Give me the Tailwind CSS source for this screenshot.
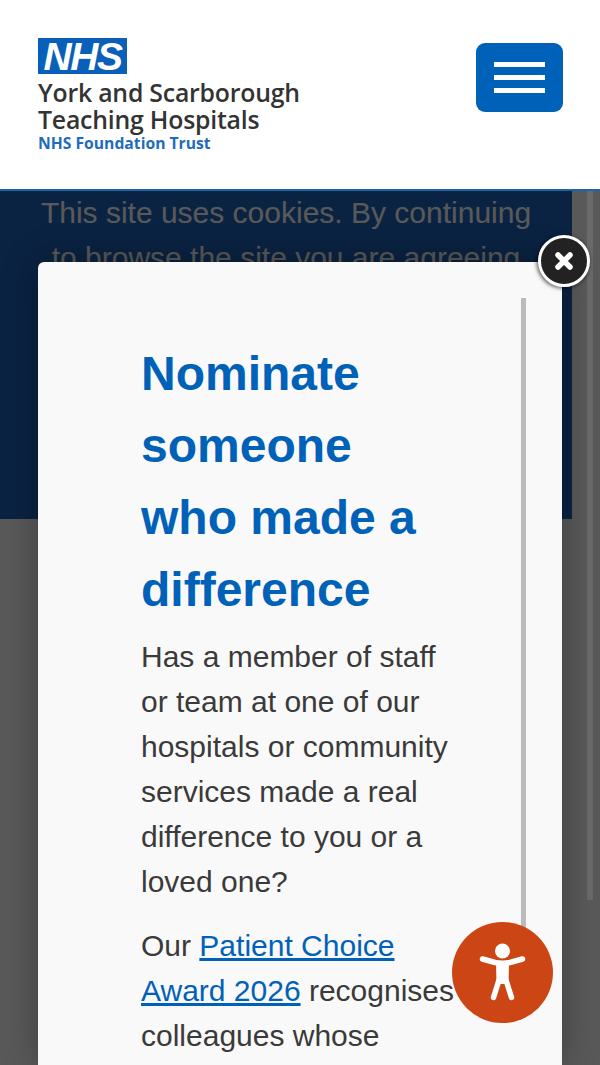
<!DOCTYPE html>
<html lang="en">
<head>
    <meta charset="UTF-8">
    <meta name="viewport" content="width=device-width, initial-scale=1.0">
    <title>York and Scarborough Teaching Hospitals</title>
    <script src="https://cdn.jsdelivr.net/npm/@tailwindcss/browser@4"></script>
</head>
<body class="relative h-[1065px] overflow-hidden bg-white font-['Liberation_Sans',Arial,sans-serif]">

    <!-- Header -->
    <header class="flex h-[191px] items-start justify-between border-b-2 border-[#1c63a8] bg-white pl-[38px] pr-[37px]">
        <a href="#" class="mt-[38px] block w-[264px]">
            <span class="flex h-[36px] w-[89px] items-center justify-center bg-[#0a5fb8] text-[39px] leading-none font-bold tracking-[-1.5px] text-white italic">NHS</span>
            <span class="mt-[5px] block font-['Open_Sans',sans-serif] text-[24.8px] leading-[27px] font-semibold tracking-[-0.2px] whitespace-nowrap text-[#333]">York and Scarborough<br>Teaching Hospitals</span>
            <span class="mt-[2px] block font-['Open_Sans',sans-serif] text-[15.7px] leading-[17px] font-bold whitespace-nowrap text-[#1f6cbd]">NHS Foundation Trust</span>
        </a>
        <button class="mt-[43px] flex h-[69px] w-[87px] flex-col items-center justify-center gap-[8px] rounded-[9px] bg-[#0061b8]">
            <span class="block h-[5px] w-[51px] bg-white"></span>
            <span class="block h-[5px] w-[51px] bg-white"></span>
            <span class="block h-[5px] w-[51px] bg-white"></span>
        </button>
    </header>

    <!-- Page behind the overlay -->
    <div class="flex h-[874px]">
        <div class="h-[328px] w-[572px] overflow-hidden bg-[#1f66bc] px-[30px] text-center text-[30px] leading-[45px] text-white">
            <p class="-mt-[1px]">This site uses cookies. By continuing<br>to browse the site you are agreeing</p>
        </div>
    </div>

    <!-- Overlay -->
    <div class="absolute inset-x-0 top-[191px] bottom-0 bg-black/65"></div>
    <div class="absolute top-[191px] left-[587px] h-[709px] w-[6px] bg-white/10"></div>

    <!-- Modal -->
    <div class="absolute top-[262px] left-[38px] h-[803px] w-[524px] rounded-t-[6px] bg-[#f9f9f9] shadow-[0_0_36px_rgba(0,0,0,0.3)]">
        <div class="absolute top-[36px] right-[36px] h-[640px] w-[5px] bg-[#bbb]"></div>
        <div class="pt-[76px] pl-[103px] pr-[103px]">
            <h2 class="text-[48px] leading-[72px] font-bold text-[#0061b8]">Nominate someone who made a difference</h2>
            <p class="mt-[8px] text-[30px] leading-[45px] text-[#3a3a3a]">Has a member of staff or team at one of our hospitals or community services made a real difference to you or a loved one?</p>
            <p class="mt-[19px] text-[30px] leading-[45px] text-[#3a3a3a]">Our <a href="#" class="text-[#0061b8] underline">Patient Choice Award 2026</a> recognises colleagues whose</p>
        </div>
    </div>

    <!-- Close button -->
    <button class="absolute top-[235px] left-[538px] flex h-[52px] w-[52px] items-center justify-center rounded-full border-[3px] border-white bg-[#222] shadow-[-1px_1px_4px_rgba(0,0,0,0.7)]">
        <svg width="24" height="24" viewBox="0 0 24 24"><path d="M6 6 18 18M18 6 6 18" stroke="#fff" stroke-width="5.5" stroke-linecap="round"/></svg>
    </button>

    <!-- Accessibility button -->
    <button class="absolute top-[922px] left-[452px] flex h-[101px] w-[101px] items-center justify-center rounded-full bg-[#cc4514]">
        <svg width="101" height="101" viewBox="0 0 101 101">
            <circle cx="50.5" cy="29" r="7.5" fill="#fff"/>
            <path d="M30.5 37 43 40.5Q50.5 42 58 40.5L70.5 37" fill="none" stroke="#fff" stroke-width="5.5" stroke-linecap="round"/>
            <path d="M47 58 41.5 75.5M54 58 59.5 75.5" fill="none" stroke="#fff" stroke-width="5.5" stroke-linecap="round"/>
            <path d="M44 41H57L56.5 62H44.5Z" fill="#fff"/>
        </svg>
    </button>

</body>
</html>
